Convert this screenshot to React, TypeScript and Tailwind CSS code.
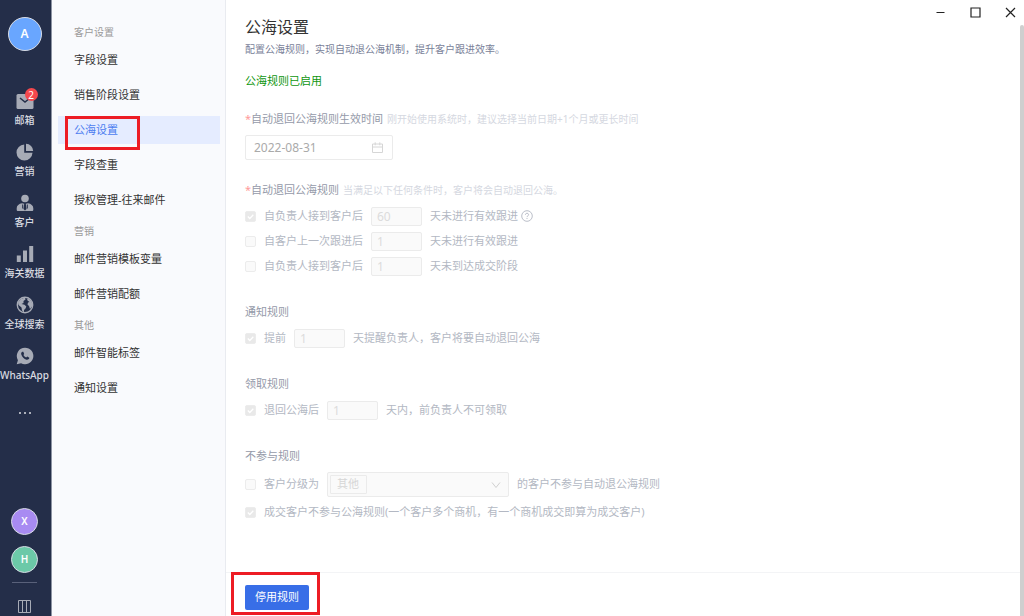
import { clsx } from "clsx";
import type { InputHTMLAttributes, ReactNode } from "react";

const NAV_ITEMS = [
  { id: "mail", label: "邮箱", badge: 2 },
  { id: "marketing", label: "营销" },
  { id: "customer", label: "客户" },
  { id: "customs", label: "海关数据" },
  { id: "search", label: "全球搜索" },
  { id: "whatsapp", label: "WhatsApp" },
];

const MENU_GROUPS = [
  {
    title: "客户设置",
    items: ["字段设置", "销售阶段设置", "公海设置", "字段查重", "授权管理-往来邮件"],
  },
  { title: "营销", items: ["邮件营销模板变量", "邮件营销配额"] },
  { title: "其他", items: ["邮件智能标签", "通知设置"] },
];

const ACTIVE_ITEM = "公海设置";

function NavIcon({ id }: { id: string }) {
  return (
    <svg width="18" height="18" viewBox="0 0 18 18" fill="currentColor" aria-hidden="true">
      {id === "mail" && (
        <>
          <rect x="0.5" y="2" width="17" height="15" rx="1.5" />
          <path d="M4 6l5 4 5-4" fill="none" stroke="#242e49" strokeWidth="1.5" />
        </>
      )}
      {id === "marketing" && (
        <>
          <path d="M8.2 1.5v8.3h8.3A8 8 0 1 1 8.2 1.5z" />
          <path d="M10 .8a7.3 7.3 0 0 1 7.2 7.2H10z" />
        </>
      )}
      {id === "customer" && (
        <>
          <circle cx="9" cy="4.5" r="3.8" />
          <path d="M6 9.3l2.2.5-.7 5.2L9 16.500l1.500-1.500-.7-5.200 2.200-.5c3 .5 5.300 2.200 5.300 5v1.400c0 .8-.5 1.300-1.300 1.300H2c-.8 0-1.300-.5-1.300-1.300v-1.400c0-2.800 2.300-4.500 5.300-5z" />
          <path d="M6.700 10.500v4M11.300 10.500v4" stroke="#242e49" />
        </>
      )}
      {id === "customs" && (
        <>
          <rect x="0.8" y="10.5" width="4" height="6.5" />
          <rect x="7" y="5.5" width="4" height="11.5" />
          <rect x="13.2" y="1" width="4" height="16" />
        </>
      )}
      {id === "search" && (
        <>
          <circle cx="9" cy="9" r="7.7" fill="none" stroke="currentColor" strokeWidth="1.4" />
          <path d="M2 6.500L5 3l4-1.500.5 2-2 1.500v2L5.500 8l3 .8 1.800 1.700-.8 2-1.500 1.500v2.500L6 14.500l-.5-3-3-2.500z" />
          <path d="M11 2.500l3 1 2.500 4-.5 3-2 2.500-1-3-1.500-1.500.5-2 1.500-.5-2-1.500z" />
        </>
      )}
      {id === "whatsapp" && (
        <>
          <path d="M9 .7a8.3 8.3 0 1 1-3.900 15.600L.7 17.300l1.200-4.100A8.300 8.300 0 0 1 9 .7z" />
          <path
            d="M6.300 4.800c-.9.500-1.400 1.500-1 2.700.8 2.500 2.700 4.400 5.200 5.200 1.200.3 2.300-.2 2.700-1.100l.1-.9-2-1.100-1.200 1c-1.200-.5-2.100-1.400-2.700-2.600l.8-1.100-.9-2.100z"
            fill="#242e49"
          />
        </>
      )}
    </svg>
  );
}

function Avatar({ letter, className }: { letter: string; className: string }) {
  return (
    <button
      type="button"
      className={clsx(
        "flex shrink-0 items-center justify-center rounded-full border border-[#d7dbe4] font-semibold text-white",
        className,
      )}
    >
      {letter}
    </button>
  );
}

function NavBar() {
  return (
    <nav className="flex w-[52px] shrink-0 flex-col items-center overflow-hidden border-r border-[#8d93a3] bg-[#242e49] pt-[17px] pr-[2px] text-[#a7abb6]">
      <Avatar letter="A" className="size-[34px] bg-[#69a6ff] text-xs" />
      <ul className="mt-[41px] flex flex-col gap-[13px]">
        {NAV_ITEMS.map((item) => (
          <li key={item.id}>
            <a href="#" className="flex h-[38px] flex-col items-center gap-[2px]">
              <span className="relative">
                <NavIcon id={item.id} />
                {item.badge && (
                  <span className="absolute -top-1 left-[9px] flex size-[13px] items-center justify-center rounded-full bg-[#f5484d] text-[10px] leading-none text-white">
                    {item.badge}
                  </span>
                )}
              </span>
              <span className="text-[10px] leading-4 font-medium whitespace-nowrap text-[#d9dbe1]">
                {item.label}
              </span>
            </a>
          </li>
        ))}
      </ul>
      <button type="button" aria-label="更多" className="mt-5 flex h-4 items-center gap-[3px]">
        <span className="size-[2px] rounded-full bg-[#d9dbe1]" />
        <span className="size-[2px] rounded-full bg-[#d9dbe1]" />
        <span className="size-[2px] rounded-full bg-[#d9dbe1]" />
      </button>
      <div className="mt-auto flex flex-col items-center">
        <Avatar letter="X" className="mb-[11px] size-[27px] bg-[#a88bf2] text-[10px]" />
        <Avatar letter="H" className="mb-[9px] size-[27px] bg-[#6cc9a8] text-[10px]" />
        <hr className="w-[25px] border-[#59617a]" />
        <button type="button" aria-label="布局" className="mt-[17px] mb-[3px]">
          <svg width="13" height="13" viewBox="0 0 13 13" fill="none" stroke="currentColor">
            <path d="M.5.5h12v12H.5zM4.5.5v12M8.5.5v12" />
          </svg>
        </button>
      </div>
    </nav>
  );
}

function SettingsMenu() {
  return (
    <aside className="flex w-[174px] shrink-0 flex-col gap-[7px] border-r border-[#e9ebf0] bg-[#f9fafd] pt-[22px] pr-[5px] pl-[6px]">
      {MENU_GROUPS.map((group) => (
        <section key={group.title}>
          <h2 className="mb-1 pl-4 text-[10px] leading-5 text-[#999]">{group.title}</h2>
          <ul className="flex flex-col gap-[7px]">
            {group.items.map((item) => {
              const active = item === ACTIVE_ITEM;
              return (
                <li key={item} className="relative">
                  <a
                    href="#"
                    className={clsx(
                      "block pl-4 text-[11px] leading-7",
                      active ? "bg-[#e5ecff] text-[#4c7df0]" : "text-[#333]",
                    )}
                  >
                    {item}
                  </a>
                  {active && (
                    <span className="pointer-events-none absolute top-0 left-[7px] h-[34px] w-[75px] border-3 border-[#ed1c24]" />
                  )}
                </li>
              );
            })}
          </ul>
        </section>
      ))}
    </aside>
  );
}

function Checkbox({ id, checked = false }: { id: string; checked?: boolean }) {
  return (
    <span className="relative mr-2 size-[11px] shrink-0">
      <input
        id={id}
        type="checkbox"
        defaultChecked={checked}
        disabled
        className="block size-[11px] appearance-none rounded-[2px] border border-[#ececec] bg-[#fafafa] checked:bg-[#e9e9e9]"
      />
      {checked && (
        <svg
          className="absolute top-0 left-0"
          width="11"
          height="11"
          viewBox="0 0 11 11"
          fill="none"
          stroke="#fff"
          strokeWidth="1.3"
        >
          <path d="M2.8 5.5l2 2 3.5-3.8" />
        </svg>
      )}
    </span>
  );
}

function NumberBox(props: InputHTMLAttributes<HTMLInputElement>) {
  return (
    <input
      type="text"
      disabled
      className="mx-2 h-[19px] w-[51px] rounded-[2px] border border-[#ebebeb] bg-[#fafafa] px-[5px] text-xs text-[#dcdcdc]"
      {...props}
    />
  );
}

type RuleProps = {
  id: string;
  checked?: boolean;
  before: string;
  value: string;
  after: string;
  children?: ReactNode;
};

function Rule({ id, checked, before, value, after, children }: RuleProps) {
  return (
    <div className="flex h-5 items-center text-[#b3b8c3]">
      <Checkbox id={id} checked={checked} />
      <label htmlFor={id}>{before}</label>
      <NumberBox defaultValue={value} aria-label={before + after} />
      <span>{after}</span>
      {children}
    </div>
  );
}

function SectionTitle({ children, hint, required }: { children: ReactNode; hint?: string; required?: boolean }) {
  return (
    <h3 className="mb-[6px] flex items-center leading-5 text-[#959aa9]">
      {required && <span className="text-[#ff9a9a]">*</span>}
      {children}
      {hint && <span className="ml-1 text-[10px] text-[#d5d8e1]">{hint}</span>}
    </h3>
  );
}

function WindowControls() {
  return (
    <div className="absolute top-0 right-0 flex h-6 items-center gap-6 pr-2 text-[#222]">
      <button type="button" aria-label="最小化">
        <svg width="11" height="11" viewBox="0 0 11 11" stroke="currentColor">
          <path d="M1.5 5.5h8" />
        </svg>
      </button>
      <button type="button" aria-label="最大化">
        <svg width="11" height="11" viewBox="0 0 11 11" fill="none" stroke="currentColor" strokeWidth="1.2">
          <path d="M1 1h9v9H1z" />
        </svg>
      </button>
      <button type="button" aria-label="关闭">
        <svg width="11" height="11" viewBox="0 0 11 11" stroke="currentColor" strokeWidth="1.2">
          <path d="M1 1l9 9M10 1l-9 9" />
        </svg>
      </button>
    </div>
  );
}

export default function App() {
  return (
    <div className="flex h-screen bg-white font-['Noto_Sans','Noto_Sans_CJK_SC',sans-serif]">
      <NavBar />
      <SettingsMenu />

      <main className="relative flex min-w-0 flex-1 flex-col text-[11px]">
        <WindowControls />
        <div className="absolute top-[25px] right-0 bottom-0 w-1 rounded-t-sm bg-[#cfcfcf]" />

        <div className="flex-1 pt-[15px] pl-[19px]">
          <h1 className="text-base leading-6 text-[#333]">公海设置</h1>
          <p className="text-[10px] leading-5 text-[#7a8299]">
            配置公海规则，实现自动退公海机制，提升客户跟进效率。
          </p>
          <p className="mt-3 mb-[18px] leading-5 text-[#0f960f]">公海规则已启用</p>

          <form className="flex flex-col">
            <section>
              <SectionTitle required hint="刚开始使用系统时，建议选择当前日期+1个月或更长时间">
                <label htmlFor="effective-date">自动退回公海规则生效时间</label>
              </SectionTitle>
              <div className="relative w-[148px]">
                <input
                  id="effective-date"
                  type="text"
                  disabled
                  defaultValue="2022-08-31"
                  className="block h-[25px] w-full rounded-[2px] border border-[#ebebeb] bg-white px-2 text-xs text-[#aaa]"
                />
                <svg
                  className="absolute top-[7px] right-[10px]"
                  width="11"
                  height="11"
                  viewBox="0 0 11 11"
                  fill="none"
                  stroke="#d6d6d6"
                >
                  <path d="M.5 2h10v8.5H.5zM.5 5h10M3.2.3v3M7.8.3v3" />
                </svg>
              </div>
            </section>

            <section className="mt-5">
              <SectionTitle required hint="当满足以下任何条件时，客户将会自动退回公海。">
                自动退回公海规则
              </SectionTitle>
              <div className="flex flex-col gap-[5px]">
                <Rule id="no-follow" checked before="自负责人接到客户后" value="60" after="天未进行有效跟进">
                  <svg
                    className="ml-[3px]"
                    width="12"
                    height="12"
                    viewBox="0 0 12 12"
                    fill="none"
                    stroke="currentColor"
                    strokeWidth="0.9"
                  >
                    <circle cx="6" cy="6" r="5.3" />
                    <path d="M4.4 4.8c0-2.200 3.300-2 3.200 0 0 1.100-1.600 1-1.600 2.300M6 8v1" />
                  </svg>
                </Rule>
                <Rule id="last-follow" before="自客户上一次跟进后" value="1" after="天未进行有效跟进" />
                <Rule id="no-deal" before="自负责人接到客户后" value="1" after="天未到达成交阶段" />
              </div>
            </section>

            <section className="mt-[26px]">
              <SectionTitle>通知规则</SectionTitle>
              <Rule id="notify" checked before="提前" value="1" after="天提醒负责人，客户将要自动退回公海" />
            </section>

            <section className="mt-[26px]">
              <SectionTitle>领取规则</SectionTitle>
              <Rule id="claim" checked before="退回公海后" value="1" after="天内，前负责人不可领取" />
            </section>

            <section className="mt-[26px] text-[#b3b8c3]">
              <SectionTitle>不参与规则</SectionTitle>
              <div className="flex items-center">
                <Checkbox id="level" />
                <label htmlFor="level">客户分级为</label>
                <div className="relative mx-2 w-[182px]">
                  <select
                    disabled
                    aria-label="客户分级"
                    className="block h-[25px] w-full appearance-none rounded-[2px] border border-[#ebebeb] bg-[#fafafa] pl-[9px] text-[#d6d6d6] opacity-100"
                  >
                    <option>其他</option>
                  </select>
                  <span className="pointer-events-none absolute top-[3px] left-[3px] h-[19px] w-[37px] rounded-[1px] border border-[#ebebeb]" />
                  <svg
                    className="absolute top-2 right-2"
                    width="10"
                    height="10"
                    viewBox="0 0 10 10"
                    fill="none"
                    stroke="#d0d0d0"
                  >
                    <path d="M1 2.500l4 5 4-5" />
                  </svg>
                </div>
                <span>的客户不参与自动退公海规则</span>
              </div>
              <div className="mt-[5px] flex h-5 items-center">
                <Checkbox id="deal" checked />
                <label htmlFor="deal">成交客户不参与公海规则(一个客户多个商机，有一个商机成交即算为成交客户)</label>
              </div>
            </section>
          </form>
        </div>

        <footer className="flex h-11 shrink-0 items-center border-t border-[#f3f4f6] pt-[6px] pl-[19px]">
          <div className="relative">
            <button type="button" className="block h-[25px] w-16 rounded-[2px] bg-[#386ee7] text-white">
              停用规则
            </button>
            <span className="pointer-events-none absolute -top-[13px] -right-[11px] -bottom-[5px] -left-[14px] border-3 border-[#ed1c24]" />
          </div>
        </footer>
      </main>
    </div>
  );
}
